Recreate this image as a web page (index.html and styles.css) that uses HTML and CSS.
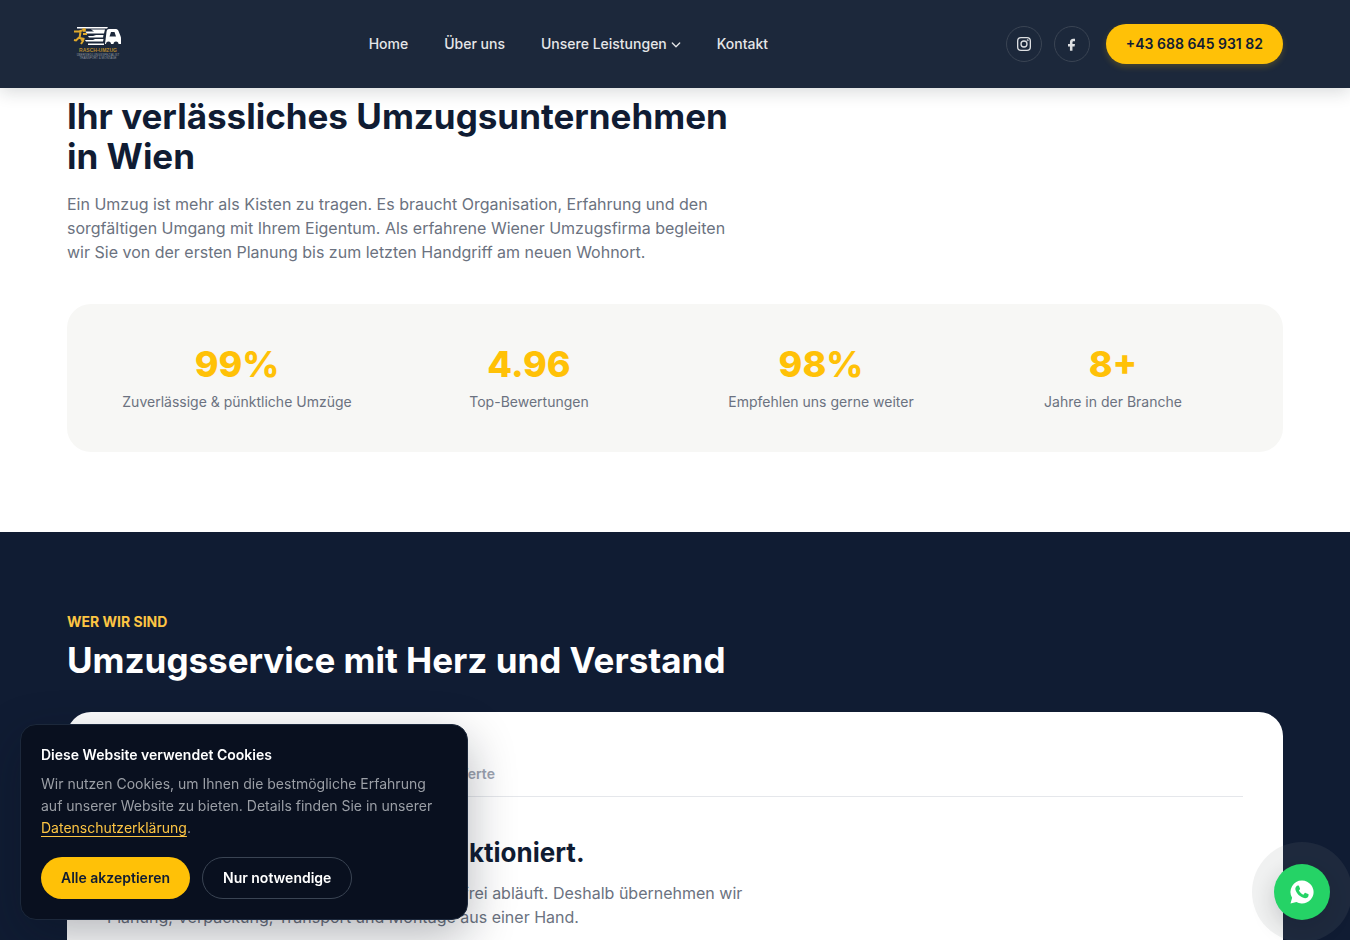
FILE: index.html
```html
<!DOCTYPE html>
<html lang="de">
<head>
<meta charset="utf-8">
<meta name="viewport" content="width=device-width, initial-scale=1">
<title>Rasch-Umzug Wien</title>
<link rel="stylesheet" href="styles.css">
</head>
<body>
<header class="site-header">
  <div class="container header-row">
    <a class="logo" href="#" aria-label="Rasch-Umzug">
      <svg viewBox="0 0 64 48" width="64" height="48">
        <g fill="#fff">
          <path d="M10 7h31l-1 1.500H10zM18 11.500h9L24 9.500h14l-1 4H20zM21 16h8l-3-1h10.500l-.5 2.500H22zM18 20h10l-2-1h10.500l-.5 2.500H19zM21 23.500h16V25H21z"/>
          <path fill-rule="evenodd" d="M42 9h7c1.500 0 2 1 2.500 2l2 5c.5 1 .5 2 .5 3v5h-2.500a2.500 2.500 0 0 0-5 0h-2.500a2.500 2.500 0 0 0-5 0H38l1.500-12c.2-2 1-3 2.500-3zm2 3-1.500 4.500h6.500l-1.500-4.500z"/>
        </g>
        <g fill="none" stroke="#e0a92b" stroke-width="2"><circle cx="17" cy="10" r="1"/><path d="M7 11.500h5l3-1M13.500 12l-1 6 5 1M16 14h4M12 17.500l-3 3-2-.5M14 19l2 2-2 3"/></g>
        <text class="logo-name" x="31" y="32" text-anchor="middle">RASCH-UMZUG</text>
        <text class="logo-sub" x="31" y="36" text-anchor="middle">ÜBERSIEDLUNGSSPEZIALIST</text>
        <text class="logo-sub" x="31" y="39" text-anchor="middle">TRANSPORT &amp; MONTAGE</text>
      </svg>
    </a>
    <nav class="nav">
      <a href="#">Home</a>
      <a href="#">Über uns</a>
      <a href="#" class="nav-drop">Unsere Leistungen
        <svg viewBox="0 0 10 10" width="10" height="10" fill="none" stroke="currentColor" stroke-width="1.300" stroke-linecap="round" stroke-linejoin="round"><path d="M1.300 4L5 7.700 8.700 4"/></svg>
      </a>
      <a href="#">Kontakt</a>
    </nav>
    <div class="actions">
      <div class="socials">
        <a class="social" href="#" aria-label="Instagram">
          <svg viewBox="0 0 24 24" width="16" height="16" fill="none" stroke="currentColor" stroke-width="2"><rect x="2.500" y="2.500" width="19" height="19" rx="5"/><circle cx="12" cy="12" r="4.500"/><circle cx="17.500" cy="6.500" r=".5"/></svg>
        </a>
        <a class="social" href="#" aria-label="Facebook">
          <svg viewBox="0 0 24 24" width="16" height="16" fill="currentColor"><path d="M16.500 4v4h-2c-1.200 0-1.800.6-1.800 1.800V12h3.800l-.7 3.600h-3.100V22H8.900v-6.400H6V12h2.900V9.400C8.900 6 10.800 4 13.900 4z"/></svg>
        </a>
      </div>
      <a class="btn btn-phone" href="tel:+4368864593182">+43 688 645 931 82</a>
    </div>
  </div>
</header>

<main>
  <section class="intro">
    <div class="container">
      <h2 class="title">Ihr verlässliches Umzugsunternehmen in Wien</h2>
      <p class="lead">Ein Umzug ist mehr als Kisten zu tragen. Es braucht Organisation, Erfahrung und den sorgfältigen Umgang mit Ihrem Eigentum. Als erfahrene Wiener Umzugsfirma begleiten wir Sie von der ersten Planung bis zum letzten Handgriff am neuen Wohnort.</p>
      <div class="stats">
        <div class="stat"><strong>99%</strong><span>Zuverlässige &amp; pünktliche Umzüge</span></div>
        <div class="stat"><strong>4.96</strong><span>Top-Bewertungen</span></div>
        <div class="stat"><strong>98%</strong><span>Empfehlen uns gerne weiter</span></div>
        <div class="stat"><strong>8+</strong><span>Jahre in der Branche</span></div>
      </div>
    </div>
  </section>

  <section class="about">
    <div class="container">
      <p class="eyebrow">WER WIR SIND</p>
      <h2 class="title title-light">Umzugsservice mit Herz und Verstand</h2>
      <div class="card">
        <div class="tabs">
          <button type="button" class="tab active">Unser Versprechen</button>
          <button type="button" class="tab">Unsere Mission</button>
          <button type="button" class="tab">Unsere Werte</button>
        </div>
        <h3 class="card-title">Der Umzug, der mühelos funktioniert.</h3>
        <p class="card-text">Wir sorgen dafür, dass Ihr Umzug immer stressfrei abläuft. Deshalb übernehmen wir Planung, Verpackung, Transport und Montage aus einer Hand.</p>
      </div>
    </div>
  </section>
</main>

<aside class="cookie" role="dialog" aria-labelledby="cookie-title">
  <h2 class="cookie-title" id="cookie-title">Diese Website verwendet Cookies</h2>
  <p class="cookie-text">Wir nutzen Cookies, um Ihnen die bestmögliche Erfahrung auf unserer Website zu bieten. Details finden Sie in unserer <a href="#">Datenschutzerklärung</a>.</p>
  <div class="cookie-actions">
    <button type="button" class="btn btn-accept">Alle akzeptieren</button>
    <button type="button" class="btn btn-outline">Nur notwendige</button>
  </div>
</aside>

<a class="whatsapp" href="#" aria-label="WhatsApp">
  <svg viewBox="0 0 24 24" width="24" height="24"><path fill="#fff" d="M12 .5A11.500 11.500 0 0 0 2.100 17.800L.5 23.500l5.900-1.500A11.500 11.500 0 1 0 12 .5z"/><path fill="#25d366" d="M8 5.500c.5 0 .8.100 1 .6l1 2.400c.1.400 0 .7-.2 1l-.9 1.100c1 1.900 2.500 3.300 4.500 4.100l1.300-1.600c.3-.3.600-.3.900-.2l2.500 1.200c.4.200.6.400.5.800-.1 2.100-1.700 3.300-3.500 3.300C10.300 17.700 5.900 13.300 5.300 9.100 5.300 7.500 6.500 5.500 8 5.500z"/></svg>
</a>
</body>
</html>
```
FILE: styles.css
```css
* { box-sizing: border-box; }
body {
  margin: 0;
  background: #fff;
  color: #101c33;
  font-family: Inter, "Liberation Sans", sans-serif;
  font-size: 16px;
  line-height: 24px;
}
html { scrollbar-width: none; }
a { color: inherit; text-decoration: none; }
h2, h3, p { margin: 0; }
svg { display: block; }
button { font: inherit; cursor: pointer; }
.container { max-width: 1280px; margin: 0 auto; padding: 0 32px; }

.site-header {
  position: sticky;
  top: 0;
  z-index: 10;
  background: #1c283b;
  box-shadow: 0 4px 16px rgba(16, 28, 40, 0.16);
}
.header-row { display: flex; align-items: center; justify-content: space-between; min-height: 88px; }
.logo-name { fill: #b8892c; font: 700 5px "Liberation Sans", sans-serif; }
.logo-sub { fill: #8d949e; font: 400 3px "Liberation Sans", sans-serif; }
.nav { display: flex; gap: 36px; color: #e5e6e8; font-size: 14px; font-weight: 500; }
.nav-drop { display: flex; align-items: center; gap: 4px; }
.actions { display: flex; align-items: center; gap: 16px; }
.socials { display: flex; gap: 12px; }
.social {
  display: grid;
  place-items: center;
  width: 36px;
  height: 36px;
  border: 1px solid #3a4453;
  border-radius: 50%;
  color: #dddfe2;
}
.btn {
  padding: 10px 20px;
  border: 0;
  border-radius: 24px;
  font-size: 14px;
  font-weight: 600;
  line-height: 20px;
  white-space: nowrap;
}
.btn-phone, .btn-accept { background: #ffc107; color: #101c33; }
.btn-phone { box-shadow: 0 3px 6px rgba(255, 193, 7, 0.2); }

.intro { padding: 8px 0 80px; }
.title { max-width: 672px; font-size: 35px; font-weight: 700; line-height: 40px; }
.lead { max-width: 672px; margin-top: 16px; color: #6b7280; }
.stats {
  display: grid;
  grid-template-columns: repeat(4, 1fr);
  gap: 32px;
  margin-top: 40px;
  padding: 40px;
  border-radius: 24px;
  background: #f7f7f5;
  text-align: center;
}
.stat strong { display: block; color: #ffc107; font-size: 36px; font-weight: 800; line-height: 40px; }
.stat span { display: block; margin-top: 8px; color: #6b7280; font-size: 14px; line-height: 20px; }

.about { padding: 80px 0; background: #101c33; }
.eyebrow { color: #fdc543; font-size: 14px; font-weight: 700; line-height: 20px; }
.title-light { margin-top: 8px; color: #fff; }
.card { margin-top: 32px; padding: 40px; border-radius: 24px; background: #fff; }
.tabs { display: flex; gap: 30px; border-bottom: 1px solid #e5e7eb; }
.tab {
  padding: 12px 0;
  border: 0;
  background: none;
  color: #9ca3af;
  font-size: 14px;
  font-weight: 600;
  line-height: 20px;
}
.active { color: #101c33; }
.card-title { margin-top: 40px; font-size: 26px; font-weight: 700; line-height: 32px; }
.card-text { max-width: 672px; margin-top: 12px; color: #6b7280; }

.cookie {
  position: fixed;
  left: 20px;
  bottom: 20px;
  z-index: 20;
  width: 448px;
  max-width: calc(100% - 40px);
  padding: 20px;
  border: 1px solid #1c283b;
  border-radius: 16px;
  background: #09101f;
  box-shadow: 0 16px 48px rgba(9, 16, 31, 0.3);
}
.cookie-title { color: #fff; font-size: 14px; font-weight: 600; line-height: 20px; }
.cookie-text { margin-top: 8px; color: #9b9fa6; font-size: 14px; line-height: 22px; }
.cookie-text a { color: #fdc543; text-decoration: underline; text-underline-offset: 3px; }
.cookie-actions { display: flex; gap: 12px; margin-top: 18px; }
.cookie-actions .btn { padding: 11px 20px; }
.cookie-actions .btn-outline { padding: 10px 20px; border: 1px solid #3a4453; background: none; color: #fff; }

.whatsapp {
  position: fixed;
  right: 20px;
  bottom: 20px;
  z-index: 20;
  display: grid;
  place-items: center;
  width: 56px;
  height: 56px;
  border-radius: 50%;
  background: #25d366;
  box-shadow: 0 0 0 22px rgba(128, 138, 140, 0.12), 0 8px 24px rgba(9, 16, 31, 0.2);
}
```
